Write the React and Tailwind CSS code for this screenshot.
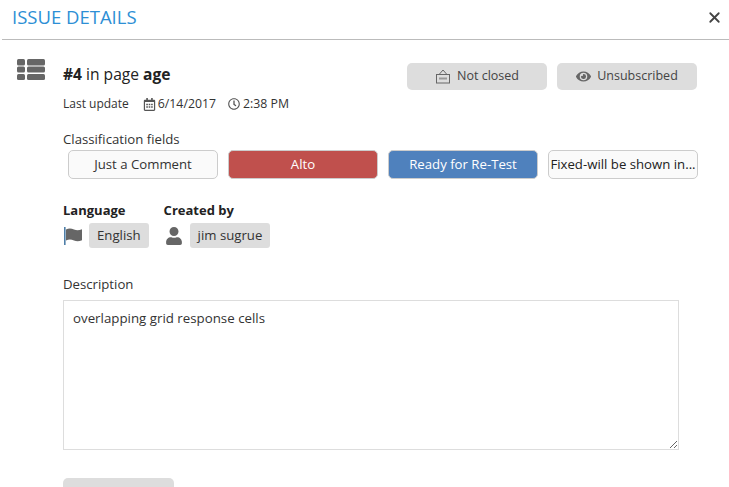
import { X } from 'lucide-react';
import { FaEye, FaRegCalendarAlt, FaRegClock, FaUser } from 'react-icons/fa';

function ListIcon() {
  return (
    <svg width="30" height="22" viewBox="0 0 30 22" className="mt-[-3px] block shrink-0" fill="#666">
      <rect x="1" y="0" width="8" height="6.500" rx="1.500" />
      <rect x="11" y="0" width="18" height="6.500" rx="1.500" />
      <rect x="1" y="7.500" width="8" height="6" rx="1.500" />
      <rect x="11" y="7.500" width="18" height="6" rx="1.500" />
      <rect x="1" y="15" width="8" height="6" rx="1.500" />
      <rect x="11" y="15" width="18" height="6" rx="1.500" />
    </svg>
  );
}

function FlagIcon() {
  return (
    <svg width="21" height="18" viewBox="0 0 21 18" className="block">
      <rect x="1" y="0" width="1.600" height="18" fill="#4f7fa8" />
      <path d="M3 2.500c3-1.500 5.500-1 8 0s5 1 8-.3v11c-3 1.300-5.500 1.300-8 .3s-5-1.500-8 0z" fill="#666" />
    </svg>
  );
}

function SignIcon() {
  return (
    <svg width="16" height="15" viewBox="0 0 16 15" className="block" fill="none" stroke="#666" strokeWidth="1">
      <path d="M4.500 5 8 1l3.500 4" />
      <rect x="1.500" y="5.500" width="13" height="8.500" />
      <path d="M4 9.500h8" strokeWidth="2" stroke="#999" />
    </svg>
  );
}

function GreyButton({ icon, children }) {
  return (
    <button className="flex h-[27px] w-[140px] items-center justify-center gap-[6px] rounded-[5px] bg-[#dddddd] text-[12.500px] text-[#444]">
      {icon}
      {children}
    </button>
  );
}

function FieldButton({ className, children }) {
  return (
    <button className={`h-[29px] w-[150px] shrink-0 truncate rounded-[5px] border border-[#ccc] pt-[1px] text-[13.200px] ${className}`}>
      {children}
    </button>
  );
}

export default function App() {
  return (
    <div
      className="h-[487px] w-[729px] overflow-hidden bg-white text-[#333]"
      style={{ fontFamily: '"Open Sans", "Noto Sans", sans-serif' }}
    >
      <header className="ml-[2px] flex h-[40px] items-center justify-between border-b border-[#bbbbbb] pb-[5px] pl-[10px] pr-[6px]">
        <h1 className="text-[18.500px] text-[#2d8fd5]">ISSUE DETAILS</h1>
        <X size={17} strokeWidth={2.500} className="text-[#444]" />
      </header>

      <div className="flex pl-[16px] pr-[32px] pt-[22px]">
        <ListIcon />
        <div className="ml-[17px] min-w-0 flex-1">
          <div className="flex items-start justify-between">
            <div>
              <p className="text-[15.600px] leading-[24px] text-[#222]">
                <b>#4</b> in page <b>age</b>
              </p>
              <div className="mt-[9px] flex items-center text-[12.300px] leading-[18px]">
                <span className="text-[12px]">Last update</span>
                <FaRegCalendarAlt size={13} className="ml-[14px] mr-[2px] text-[#555]" />
                <span>6/14/2017</span>
                <FaRegClock size={12} className="ml-[12px] mr-[3px] text-[#555]" />
                <span>2:38 PM</span>
              </div>
            </div>
            <div className="mt-[1px] flex gap-[10px]">
              <GreyButton icon={<SignIcon />}>Not closed</GreyButton>
              <GreyButton icon={<FaEye size={15} className="text-[#666]" />}>Unsubscribed</GreyButton>
            </div>
          </div>

          <p className="mt-[17px] text-[13.200px] leading-[18px]">Classification fields</p>
          <div className="ml-[5px] mt-[2px] flex gap-[10px]">
            <FieldButton className="bg-[#fafafa]">Just a Comment</FieldButton>
            <FieldButton className="bg-[#c0504d] text-white">Alto</FieldButton>
            <FieldButton className="bg-[#4f81bd] text-white">Ready for Re-Test</FieldButton>
            <FieldButton className="bg-[#fafafa] text-[#222]">Fixed-will be shown in...</FieldButton>
          </div>

          <div className="mt-[22px] flex gap-[15px]">
            <div>
              <p className="text-[13px] font-bold leading-[18px] text-[#222]">Language</p>
              <div className="mt-[4px] flex items-center gap-[5px]">
                <FlagIcon />
                <span className="rounded-[3px] bg-[#dddddd] px-[8px] text-[13.200px] leading-[25px]">English</span>
              </div>
            </div>
            <div>
              <p className="text-[13px] font-bold leading-[18px] text-[#222]">Created by</p>
              <div className="mt-[4px] flex items-center gap-[7px]">
                <FaUser size={18} className="ml-[1px] text-[#666]" />
                <span className="rounded-[3px] bg-[#dddddd] px-[8px] text-[13.200px] leading-[25px]">jim sugrue</span>
              </div>
            </div>
          </div>

          <p className="mt-[27px] text-[13.200px] leading-[18px]">Description</p>
          <textarea
            className="mt-[7px] block h-[150px] w-[616px] border border-[#dddddd] px-[9px] py-[8px] text-[13.300px] leading-[18px] text-[#333] outline-none"
            defaultValue="overlapping grid response cells"
          />
          <div className="mt-[28px] h-[30px] w-[111px] rounded-[5px] bg-[#dddddd]" />
        </div>
      </div>
    </div>
  );
}
